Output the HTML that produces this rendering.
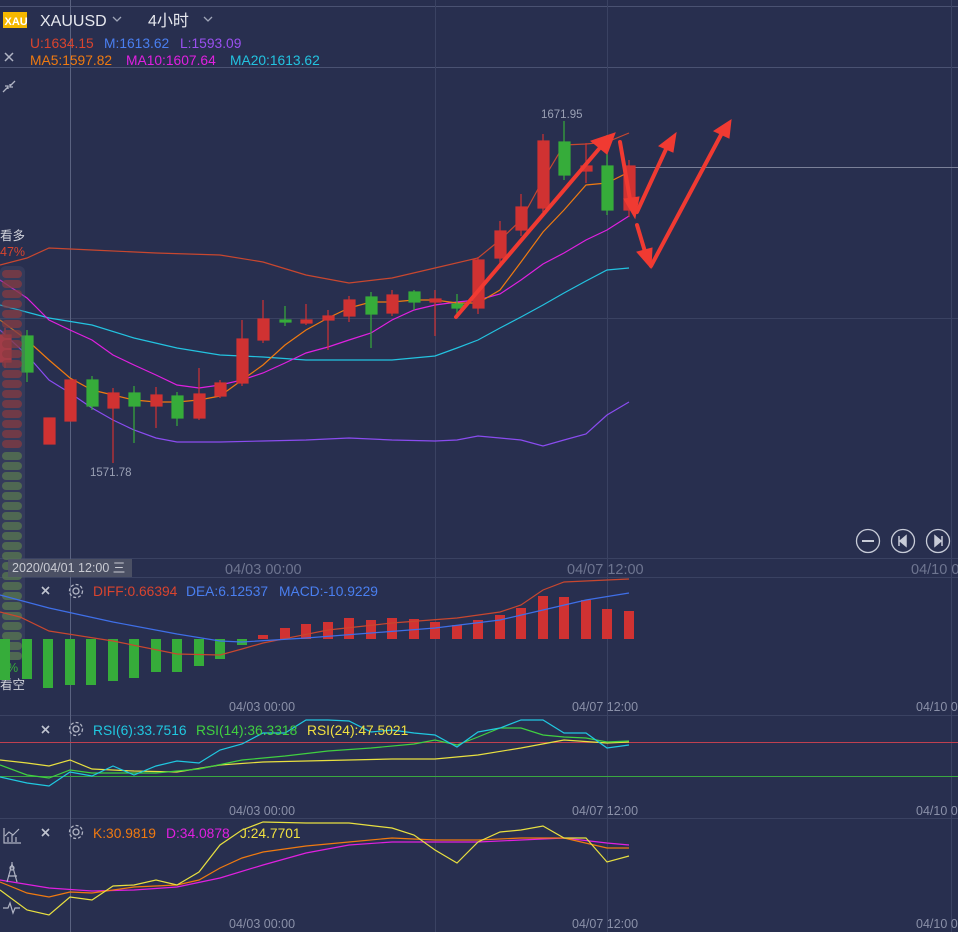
<!DOCTYPE html>
<html><head><meta charset="utf-8"><style>
html,body{margin:0;padding:0;background:#282f4f;width:958px;height:932px;overflow:hidden}
svg{display:block}
text{font-family:"Liberation Sans","Noto Sans CJK SC",sans-serif}
</style></head><body>
<svg width="958" height="932" viewBox="0 0 958 932">
<rect width="958" height="932" fill="#282f4f"/>
<!-- grid -->
<g stroke="#3a4262" stroke-width="1">
<line x1="0" y1="6.5" x2="958" y2="6.5" stroke="#4a5272"/>
<line x1="0" y1="67.5" x2="958" y2="67.5" stroke="#4a5272"/>
<line x1="0" y1="318.5" x2="958" y2="318.5"/>
<line x1="0" y1="558.5" x2="958" y2="558.5"/>
<line x1="0" y1="577.5" x2="958" y2="577.5"/>
<line x1="0" y1="715.5" x2="958" y2="715.5"/>
<line x1="0" y1="818.5" x2="958" y2="818.5"/>
<line x1="435.5" y1="0" x2="435.5" y2="932"/>
<line x1="607.5" y1="0" x2="607.5" y2="932"/>
<line x1="951.5" y1="0" x2="951.5" y2="932"/>
</g>
<line x1="70.5" y1="0" x2="70.5" y2="932" stroke="#5a6280" stroke-width="1"/>
<line x1="630" y1="167.5" x2="958" y2="167.5" stroke="#7a8098" stroke-width="1"/>

<!-- main lines -->
<g fill="none" stroke-width="1.2">
<polyline stroke="#c8472f" points="0,265 27,258 49,248 92,250 156,253 220,255 263,262 306,275 349,283 392,278 435,268 478,258 500,240 521,220 543,180 564,145 586,144 607,142 629,133"/>
<polyline stroke="#23c3e0" points="0,305 49,318 92,325 134,338 177,348 220,355 263,357 306,360 349,360 392,360 435,356 457,348 478,340 500,328 521,317 543,305 564,293 586,281 607,270 629,268"/>
<polyline stroke="#8a4cf0" points="0,330 27,355 49,380 70,393 92,408 113,420 134,430 156,438 177,442 220,442 263,441 306,440 349,438 392,440 435,441 457,440 478,436 500,438 521,440 543,446 564,440 586,434 607,415 629,402"/>
<polyline stroke="#e020e0" points="0,280 27,298 49,320 70,330 92,340 113,355 134,365 156,375 177,385 199,388 220,385 242,380 263,373 285,363 306,353 328,347 349,340 371,333 392,320 414,310 435,305 457,302 478,300 500,294 521,280 543,264 564,253 586,240 607,230 629,216"/>
<polyline stroke="#f07a10" points="0,320 27,340 49,360 70,378 92,390 113,395 134,400 156,402 177,402 199,400 220,396 242,380 263,365 285,345 306,330 328,318 349,308 371,302 392,302 414,300 435,300 457,303 478,303 500,290 521,262 543,232 564,210 586,185 607,183 629,172"/>
</g>

<!-- candles -->
<g stroke-width="1.2">
<g fill="#d03232" stroke="#d03232">
<line x1="5" y1="328" x2="5" y2="368"/><rect x="0" y="335" width="11" height="27"/>
<rect x="44" y="418" width="11" height="26"/>
<rect x="65" y="380" width="11" height="41"/>
<line x1="113" y1="388" x2="113" y2="463"/><rect x="108" y="393" width="11" height="15"/>
<line x1="156" y1="387" x2="156" y2="428"/><rect x="151" y="395" width="11" height="11"/>
<line x1="199" y1="368" x2="199" y2="420"/><rect x="194" y="394" width="11" height="24"/>
<line x1="220" y1="380" x2="220" y2="398"/><rect x="215" y="383" width="11" height="13"/>
<line x1="242" y1="320" x2="242" y2="386"/><rect x="237" y="339" width="11" height="44"/>
<line x1="263" y1="300" x2="263" y2="343"/><rect x="258" y="319" width="11" height="21"/>
<line x1="306" y1="304" x2="306" y2="325"/><rect x="301" y="320" width="11" height="3"/>
<line x1="328" y1="310" x2="328" y2="350"/><rect x="323" y="316" width="11" height="4"/>
<line x1="349" y1="296" x2="349" y2="322"/><rect x="344" y="300" width="11" height="16"/>
<line x1="392" y1="290" x2="392" y2="316"/><rect x="387" y="295" width="11" height="18"/>
<line x1="435" y1="290" x2="435" y2="336"/><rect x="430" y="299" width="11" height="3"/>
<line x1="478" y1="257" x2="478" y2="314"/><rect x="473" y="260" width="11" height="48"/>
<line x1="500" y1="221" x2="500" y2="268"/><rect x="495" y="231" width="11" height="27"/>
<line x1="521" y1="194" x2="521" y2="236"/><rect x="516" y="207" width="11" height="23"/>
<line x1="543" y1="134" x2="543" y2="212"/><rect x="538" y="141" width="11" height="67"/>
<line x1="586" y1="143" x2="586" y2="183"/><rect x="581" y="166" width="11" height="5"/>
<line x1="629" y1="160" x2="629" y2="217"/><rect x="624" y="166" width="11" height="44"/>
</g>
<g fill="#36ac3a" stroke="#36ac3a">
<line x1="27" y1="330" x2="27" y2="382"/><rect x="22" y="336" width="11" height="36"/>
<line x1="92" y1="376" x2="92" y2="410"/><rect x="87" y="380" width="11" height="26"/>
<line x1="134" y1="386" x2="134" y2="443"/><rect x="129" y="393" width="11" height="13"/>
<line x1="177" y1="392" x2="177" y2="426"/><rect x="172" y="396" width="11" height="22"/>
<line x1="285" y1="306" x2="285" y2="326"/><rect x="280" y="320" width="11" height="2"/>
<line x1="371" y1="292" x2="371" y2="348"/><rect x="366" y="297" width="11" height="17"/>
<line x1="414" y1="290" x2="414" y2="310"/><rect x="409" y="292" width="11" height="10"/>
<line x1="457" y1="294" x2="457" y2="318"/><rect x="452" y="304" width="11" height="4"/>
<line x1="564" y1="121" x2="564" y2="180"/><rect x="559" y="142" width="11" height="33"/>
<line x1="607" y1="135" x2="607" y2="215"/><rect x="602" y="166" width="11" height="44"/>
</g>
</g>
<text x="541" y="118" fill="#9aa0b4" font-size="11.5">1671.95</text>
<text x="90" y="476" fill="#9aa0b4" font-size="11.5">1571.78</text>

<!-- arrows -->
<g fill="#f03a32" stroke="#f03a32" stroke-width="4" stroke-linecap="round">
<line x1="456" y1="317" x2="604" y2="143"/><polygon points="615,133 591,141 607,154" stroke-width="1"/>
<line x1="620" y1="142" x2="631" y2="205"/><polygon points="635,218 624,199 639,197" stroke-width="1"/>
<line x1="637" y1="212" x2="667" y2="147"/><polygon points="676,133 659,146 673,152" stroke-width="1"/>
<line x1="637" y1="225" x2="646" y2="255"/><polygon points="651,268 637,252 652,248" stroke-width="1"/>
<line x1="651" y1="266" x2="722" y2="133"/><polygon points="731,120 714,131 729,138" stroke-width="1"/>
</g>

<!-- sidebar pills (over chart, translucent) -->
<g>
<rect x="0" y="266" width="25" height="394" rx="6" fill="#4a5070" opacity="0.35"/>
<g fill="#8a3a40" opacity="0.7">
<rect x="2" y="270" width="20" height="8" rx="4"/><rect x="2" y="280" width="20" height="8" rx="4"/><rect x="2" y="290" width="20" height="8" rx="4"/><rect x="2" y="300" width="20" height="8" rx="4"/><rect x="2" y="310" width="20" height="8" rx="4"/><rect x="2" y="320" width="20" height="8" rx="4"/><rect x="2" y="330" width="20" height="8" rx="4"/><rect x="2" y="340" width="20" height="8" rx="4"/><rect x="2" y="350" width="20" height="8" rx="4"/><rect x="2" y="360" width="20" height="8" rx="4"/><rect x="2" y="370" width="20" height="8" rx="4"/><rect x="2" y="380" width="20" height="8" rx="4"/><rect x="2" y="390" width="20" height="8" rx="4"/><rect x="2" y="400" width="20" height="8" rx="4"/><rect x="2" y="410" width="20" height="8" rx="4"/><rect x="2" y="420" width="20" height="8" rx="4"/><rect x="2" y="430" width="20" height="8" rx="4"/><rect x="2" y="440" width="20" height="8" rx="4"/>
</g>
<g fill="#587850" opacity="0.75">
<rect x="2" y="452" width="20" height="8" rx="4"/><rect x="2" y="462" width="20" height="8" rx="4"/><rect x="2" y="472" width="20" height="8" rx="4"/><rect x="2" y="482" width="20" height="8" rx="4"/><rect x="2" y="492" width="20" height="8" rx="4"/><rect x="2" y="502" width="20" height="8" rx="4"/><rect x="2" y="512" width="20" height="8" rx="4"/><rect x="2" y="522" width="20" height="8" rx="4"/><rect x="2" y="532" width="20" height="8" rx="4"/><rect x="2" y="542" width="20" height="8" rx="4"/><rect x="2" y="552" width="20" height="8" rx="4"/><rect x="2" y="562" width="20" height="8" rx="4"/><rect x="2" y="572" width="20" height="8" rx="4"/><rect x="2" y="582" width="20" height="8" rx="4"/><rect x="2" y="592" width="20" height="8" rx="4"/><rect x="2" y="602" width="20" height="8" rx="4"/><rect x="2" y="612" width="20" height="8" rx="4"/><rect x="2" y="622" width="20" height="8" rx="4"/><rect x="2" y="632" width="20" height="8" rx="4"/><rect x="2" y="642" width="20" height="8" rx="4"/><rect x="2" y="652" width="20" height="8" rx="4"/>
</g>
</g>

<!-- header -->
<rect x="3" y="12" width="24" height="16" fill="#f5b800"/>
<text x="4.5" y="25" fill="#fff" font-size="11" font-weight="bold">XAU</text>
<text x="40" y="26" fill="#e6e8ee" font-size="16">XAUUSD</text>
<path d="M113 17 l4 4 l4 -4" stroke="#a0a6b8" fill="none" stroke-width="1.3"/>
<text x="148" y="26" fill="#e6e8ee" font-size="16">4小时</text>
<path d="M204 17 l4 4 l4 -4" stroke="#a0a6b8" fill="none" stroke-width="1.3"/>
<text x="30" y="48" fill="#d9442e" font-size="13.8">U:1634.15</text>
<text x="104" y="48" fill="#4a7ff0" font-size="13.8">M:1613.62</text>
<text x="180" y="48" fill="#9a50f0" font-size="13.8">L:1593.09</text>
<text x="30" y="65" fill="#f07a10" font-size="13.8">MA5:1597.82</text>
<text x="126" y="65" fill="#e020e0" font-size="13.8">MA10:1607.64</text>
<text x="230" y="65" fill="#23c3e0" font-size="13.8">MA20:1613.62</text>
<path d="M5 53 l8 8 M13 53 l-8 8" stroke="#b0b4c4" stroke-width="1.5"/>
<path d="M3 92 l5 -5 M5 86 h3 v3 M15 81 l-5 5 M13 87 h-3 v-3" stroke="#b0b4c4" stroke-width="1.3" fill="none"/>

<text x="0" y="240" fill="#d0d2da" font-size="12.5">看多</text>
<text x="0" y="256" fill="#d9442e" font-size="12.5">47%</text>
<text x="0" y="672" fill="#36ac3a" font-size="12.5">3%</text>
<text x="0" y="689" fill="#d0d2da" font-size="12.5">看空</text>

<!-- buttons -->
<g stroke="#c8ccd8" stroke-width="1.3" fill="none">
<circle cx="868" cy="541" r="11.5"/><line x1="862" y1="541" x2="874" y2="541" stroke-width="2"/>
<circle cx="903" cy="541" r="11.5"/><circle cx="938" cy="541" r="11.5"/>
</g>
<path d="M899 536 v10 M906 536 l-6 5 l6 5z" fill="#c8ccd8" stroke="#c8ccd8" stroke-width="1.5"/>
<path d="M942 536 v10 M935 536 l6 5 l-6 5z" fill="#c8ccd8" stroke="#c8ccd8" stroke-width="1.5"/>

<!-- axis labels -->
<g fill="#6e7590" font-size="14.5">
<text x="225" y="574">04/03 00:00</text>
<text x="567" y="574">04/07 12:00</text>
<text x="911" y="574">04/10 0</text>
</g>
<g fill="#8a90a8" font-size="12.5">
<text x="229" y="711">04/03 00:00</text><text x="572" y="711">04/07 12:00</text><text x="916" y="711">04/10 0</text>
<text x="229" y="815">04/03 00:00</text><text x="572" y="815">04/07 12:00</text><text x="916" y="815">04/10 0</text>
<text x="229" y="928">04/03 00:00</text><text x="572" y="928">04/07 12:00</text><text x="916" y="928">04/10 0</text>
</g>
<rect x="8" y="559" width="124" height="18" fill="#4f5466" opacity="0.9"/>
<text x="12" y="572" fill="#c8cad2" font-size="12.5">2020/04/01 12:00 三</text>

<!-- MACD -->
<g fill="#36ac3a">
<rect x="0" y="639" width="10" height="41"/><rect x="22" y="639" width="10" height="40"/><rect x="43" y="639" width="10" height="49"/><rect x="65" y="639" width="10" height="46"/><rect x="86" y="639" width="10" height="46"/><rect x="108" y="639" width="10" height="42"/><rect x="129" y="639" width="10" height="39"/><rect x="151" y="639" width="10" height="33"/><rect x="172" y="639" width="10" height="33"/><rect x="194" y="639" width="10" height="27"/><rect x="215" y="639" width="10" height="20"/><rect x="237" y="639" width="10" height="6"/>
</g>
<g fill="#d03232">
<rect x="258" y="635" width="10" height="4"/><rect x="280" y="628" width="10" height="11"/><rect x="301" y="624" width="10" height="15"/><rect x="323" y="622" width="10" height="17"/><rect x="344" y="618" width="10" height="21"/><rect x="366" y="620" width="10" height="19"/><rect x="387" y="618" width="10" height="21"/><rect x="409" y="619" width="10" height="20"/><rect x="430" y="622" width="10" height="17"/><rect x="452" y="625" width="10" height="14"/><rect x="473" y="620" width="10" height="19"/><rect x="495" y="615" width="10" height="24"/><rect x="516" y="608" width="10" height="31"/><rect x="538" y="596" width="10" height="43"/><rect x="559" y="597" width="10" height="42"/><rect x="581" y="600" width="10" height="39"/><rect x="602" y="609" width="10" height="30"/><rect x="624" y="611" width="10" height="28"/>
</g>
<g fill="none" stroke-width="1.2">
<polyline stroke="#c8472f" points="0,612 20,617 49,631 113,641 177,654 220,655 242,649 263,643 328,630 392,623 457,618 500,612 521,605 543,590 564,582 607,580 629,579"/>
<polyline stroke="#3f6fe8" points="0,595 49,608 113,622 177,634 220,641 242,642 306,638 371,633 435,628 500,620 543,610 586,600 629,593"/>
</g>
<path d="M42 587 l7 7 M49 587 l-7 7" stroke="#c0c4d0" stroke-width="1.6"/>
<g transform="translate(76,591)" fill="none" stroke="#b0b4c4" stroke-width="1.3"><circle r="3"/><circle r="6.5" stroke-dasharray="3 2"/></g>
<text x="93" y="596" fill="#d9442e" font-size="13.8">DIFF:0.66394</text>
<text x="186" y="596" fill="#4a7ff0" font-size="13.8">DEA:6.12537</text>
<text x="279" y="596" fill="#4a7ff0" font-size="13.8">MACD:-10.9229</text>

<!-- RSI -->
<line x1="0" y1="742.5" x2="958" y2="742.5" stroke="#c04050" stroke-width="1"/>
<line x1="0" y1="776.5" x2="958" y2="776.5" stroke="#3aa840" stroke-width="1"/>
<g fill="none" stroke-width="1.2">
<polyline stroke="#e8e040" points="0,760 27,763 49,766 70,760 92,769 134,771 177,772 220,765 263,762 306,761 349,760 392,759 435,759 478,755 521,748 564,740 607,743 629,742"/>
<polyline stroke="#40d040" points="0,765 27,775 49,778 70,770 92,773 113,773 156,773 199,769 242,760 285,756 328,751 371,748 414,744 435,740 457,745 478,737 500,728 521,728 543,735 564,737 586,738 607,742 629,741"/>
<polyline stroke="#20c8e0" points="0,777 27,783 49,786 70,772 92,776 113,766 134,775 156,766 177,761 199,763 220,750 242,744 263,733 285,733 306,720 328,720 349,721 371,732 392,730 414,733 435,735 457,747 478,732 500,728 521,720 543,720 564,733 586,733 607,748 629,745"/>
</g>
<path d="M42 726 l7 7 M49 726 l-7 7" stroke="#c0c4d0" stroke-width="1.6"/>
<g transform="translate(76,729)" fill="none" stroke="#b0b4c4" stroke-width="1.3"><circle r="3"/><circle r="6.5" stroke-dasharray="3 2"/></g>
<text x="93" y="735" fill="#20c8e0" font-size="13.8">RSI(6):33.7516</text>
<text x="196" y="735" fill="#40d040" font-size="13.8">RSI(14):36.3318</text>
<text x="307" y="735" fill="#f0e040" font-size="13.8">RSI(24):47.5021</text>

<!-- KDJ -->
<g fill="none" stroke-width="1.2">
<polyline stroke="#e020e0" points="0,880 49,888 92,891 134,890 177,887 220,878 263,865 306,853 349,845 392,842 435,842 478,842 521,840 564,838 607,843 629,845"/>
<polyline stroke="#f07a10" points="0,882 27,893 49,897 70,892 92,893 134,887 177,885 199,880 220,868 242,858 263,852 306,846 349,842 392,838 435,840 478,840 521,838 564,838 607,848 629,848"/>
<polyline stroke="#e8e040" points="0,890 27,910 49,915 70,897 92,900 113,886 134,885 156,880 177,885 199,872 220,845 242,830 263,822 306,823 349,823 392,828 414,835 435,850 457,863 478,842 500,832 521,830 543,826 564,838 586,838 607,862 629,856"/>
</g>
<path d="M42 829 l7 7 M49 829 l-7 7" stroke="#c0c4d0" stroke-width="1.6"/>
<g transform="translate(76,832)" fill="none" stroke="#b0b4c4" stroke-width="1.3"><circle r="3"/><circle r="6.5" stroke-dasharray="3 2"/></g>
<text x="93" y="838" fill="#f07a10" font-size="13.8">K:30.9819</text>
<text x="166" y="838" fill="#e020e0" font-size="13.8">D:34.0878</text>
<text x="240" y="838" fill="#f0e040" font-size="13.8">J:24.7701</text>
<g stroke="#b0b4c4" stroke-width="1.2" fill="none">
<path d="M4 828 v15 h17 M8 842 v-5 M12 842 v-7 M16 842 v-5 M5 836 l4 -4 l4 3 l6 -6"/>
<path d="M12 864 l-5 18 M12 864 l5 18 M8 876 h9 M12 864 v-2"/><circle cx="12" cy="868" r="2"/>
<path d="M3 908 h5 l2 -5 l3 10 l2 -5 h5"/>
</g>
</svg>
</body></html>
